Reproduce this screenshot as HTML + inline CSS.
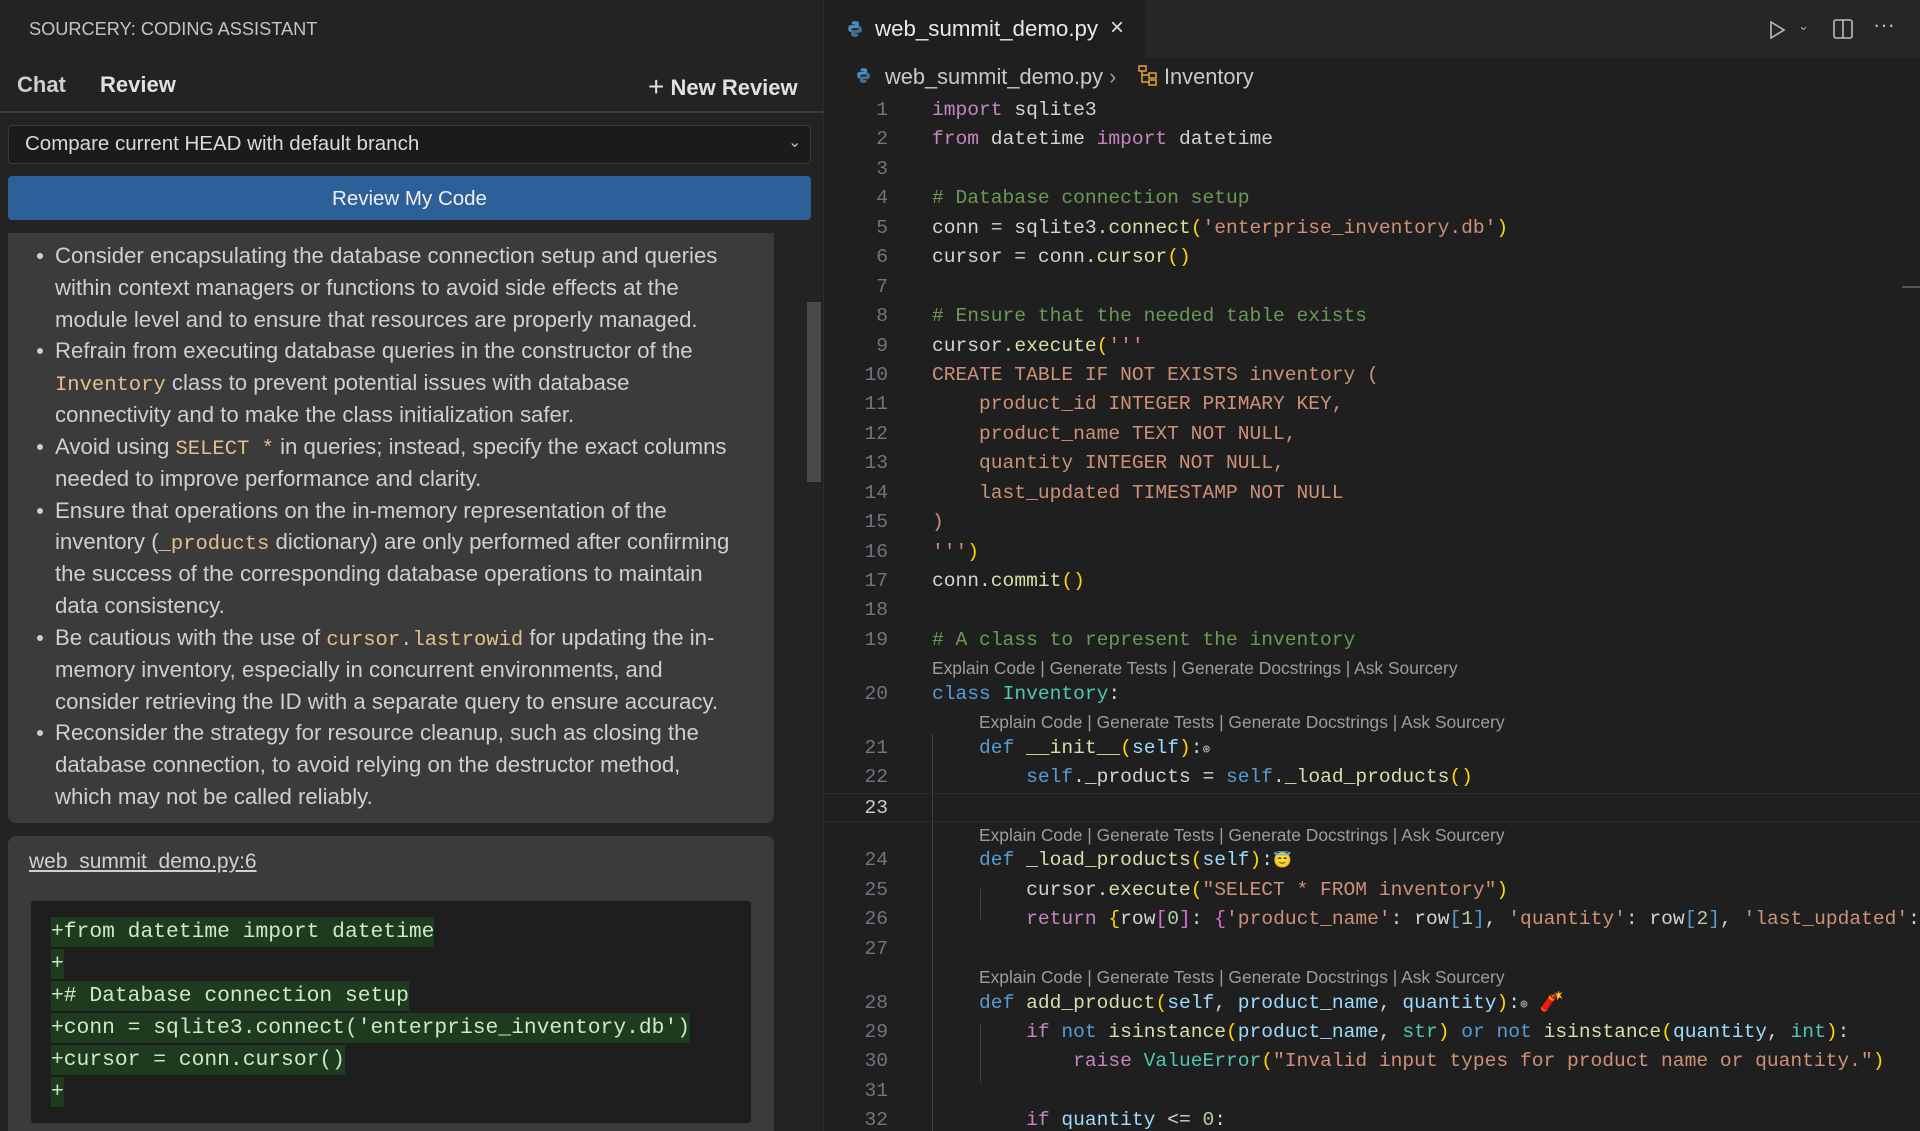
<!DOCTYPE html>
<html><head><meta charset="utf-8">
<style>
*{margin:0;padding:0;box-sizing:border-box}
html,body{overflow:hidden}
body{width:1920px;height:1131px;overflow:hidden;background:#1f1f1f;font-family:"Liberation Sans",sans-serif;position:relative}
#left{position:absolute;left:0;top:0;width:823px;height:1131px;background:#232323;overflow:hidden}
.abs{position:absolute;white-space:nowrap}
#sep{position:absolute;left:823px;top:0;width:1px;height:1131px;background:#2b2b2b}
#tabbar{position:absolute;left:824px;top:0;width:1096px;height:58px;background:#262626}
#tab{position:absolute;left:824px;top:0;width:321px;height:58px;background:#1f1f1f}
.bl{position:absolute;left:55px;color:#cfcfcf;font-size:22.2px;line-height:32px;white-space:nowrap}
.dot{position:absolute;left:37px;width:6px;height:6px;border-radius:3px;background:#cfcfcf}
.ic{font-family:"Liberation Mono",monospace;color:#e2c08d;font-size:20.5px}
.dl{position:absolute;left:51px;height:30px;background:#1e3a1f;color:#cfe8c8;font-family:"Liberation Mono",monospace;font-size:21.3px;line-height:30px;white-space:pre}
#code{position:absolute;left:824px;top:96px;width:1096px;height:1035px;overflow:hidden}
.r{position:relative;height:29.45px;line-height:29.45px;font-family:"Liberation Mono",monospace;font-size:19.6px;color:#d4d4d4;white-space:pre}
.r .n{position:absolute;left:0;width:64px;text-align:right;color:#6e7681}
.r .t{position:absolute;left:108px}
.cl{position:relative;height:24.45px;line-height:24.45px;font-size:17.4px;color:#9d9d9d;white-space:pre}
.cl span{position:absolute;top:1px}
.k{color:#c586c0}.b{color:#569cd6}.s{color:#ce9178}.c{color:#6a9955}.f{color:#dcdcaa}.y{color:#ffd700}.p{color:#9cdcfe}.g{color:#4ec9b0}.nu{color:#b5cea8}.pk{color:#da70d6}
.guide{position:absolute;width:1px;background:#404040}
</style></head><body>
<div id="left">
  <div class="abs" style="left:29px;top:19px;font-size:18.2px;color:#c4c4c4">SOURCERY: CODING ASSISTANT</div>
  <div class="abs" style="left:17px;top:72px;font-size:22px;font-weight:bold;color:#cfcfcf">Chat</div>
  <div class="abs" style="left:100px;top:72px;font-size:22px;font-weight:bold;color:#e0e0e0">Review</div>
  <div class="abs" style="left:648px;top:70px;font-size:22px;font-weight:bold;color:#e0e0e0"><span style="font-size:28px;font-weight:normal;position:relative;top:1px">+</span> New Review</div>
  <div style="position:absolute;left:0;top:111px;width:823px;height:2px;background:#3a3a3a"></div>
  <div style="position:absolute;left:8px;top:125px;width:803px;height:39px;background:#1b1b1b;border:1px solid #3a3a3a;border-radius:4px"></div>
  <div class="abs" style="left:25px;top:132px;font-size:20.5px;color:#dadada">Compare current HEAD with default branch</div>
  <div class="abs" style="left:788px;top:132px;font-size:16px;color:#bbb">&#8964;</div>
  <div style="position:absolute;left:8px;top:176px;width:803px;height:44px;background:#2d5f98;border-radius:4px"></div>
  <div class="abs" style="left:0;width:819px;text-align:center;top:187px;font-size:20.5px;color:#f0f0f0">Review My Code</div>
  <div style="position:absolute;left:8px;top:233px;width:766px;height:590px;background:#3b3b3b;border-radius:0 0 8px 8px"></div>
  <div style="position:absolute;left:807px;top:302px;width:14px;height:180px;background:#4a4a4a"></div>
  <div class="bl" style="top:240px">Consider encapsulating the database connection setup and queries</div>
  <div class="bl" style="top:272px">within context managers or functions to avoid side effects at the</div>
  <div class="bl" style="top:304px">module level and to ensure that resources are properly managed.</div>
  <div class="bl" style="top:335px">Refrain from executing database queries in the constructor of the</div>
  <div class="bl" style="top:367px"><span class="ic">Inventory</span> class to prevent potential issues with database</div>
  <div class="bl" style="top:399px">connectivity and to make the class initialization safer.</div>
  <div class="bl" style="top:431px">Avoid using <span class="ic">SELECT *</span> in queries; instead, specify the exact columns</div>
  <div class="bl" style="top:463px">needed to improve performance and clarity.</div>
  <div class="bl" style="top:495px">Ensure that operations on the in-memory representation of the</div>
  <div class="bl" style="top:526px">inventory (<span class="ic">_products</span> dictionary) are only performed after confirming</div>
  <div class="bl" style="top:558px">the success of the corresponding database operations to maintain</div>
  <div class="bl" style="top:590px">data consistency.</div>
  <div class="bl" style="top:622px">Be cautious with the use of <span class="ic">cursor.lastrowid</span> for updating the in-</div>
  <div class="bl" style="top:654px">memory inventory, especially in concurrent environments, and</div>
  <div class="bl" style="top:686px">consider retrieving the ID with a separate query to ensure accuracy.</div>
  <div class="bl" style="top:717px">Reconsider the strategy for resource cleanup, such as closing the</div>
  <div class="bl" style="top:749px">database connection, to avoid relying on the destructor method,</div>
  <div class="bl" style="top:781px">which may not be called reliably.</div>
  <div class="dot" style="top:253px"></div><div class="dot" style="top:348px"></div><div class="dot" style="top:444px"></div><div class="dot" style="top:508px"></div><div class="dot" style="top:635px"></div><div class="dot" style="top:730px"></div>
  <div style="position:absolute;left:8px;top:836px;width:766px;height:295px;background:#3b3b3b;border-radius:8px 8px 0 0"></div>
  <div class="abs" style="left:29px;top:850px;font-size:21px;color:#d0d0d0;text-decoration:underline">web_summit_demo.py:6</div>
  <div style="position:absolute;left:31px;top:901px;width:720px;height:222px;background:#1e1e1e;border-radius:3px"></div>
  <div class="dl" style="top:917px">+from datetime import datetime</div>
  <div class="dl" style="top:949px">+</div>
  <div class="dl" style="top:981px">+# Database connection setup</div>
  <div class="dl" style="top:1013px">+conn = sqlite3.connect('enterprise_inventory.db')</div>
  <div class="dl" style="top:1045px">+cursor = conn.cursor()</div>
  <div class="dl" style="top:1077px">+</div>
</div>
<div id="sep"></div>
<div id="tabbar"></div>
<div id="tab"></div>
<svg class="abs" style="left:846px;top:20px" width="18" height="18" viewBox="0 0 16 16"><path d="M7.9 1C5 1 5.2 2.3 5.2 2.3V4h2.8v.6H4.1S2 4.4 2 7.6s1.8 3 1.8 3h1.1V9s-.1-1.8 1.8-1.8h3s1.7 0 1.7-1.7V2.7S11.7 1 7.9 1z" fill="#4b8bbe"/><path d="M8.1 15c2.9 0 2.7-1.3 2.7-1.3V12H8v-.6h3.9s2.1.2 2.1-3-1.8-3-1.8-3h-1.1V7s.1 1.8-1.8 1.8h-3S4.6 8.8 4.6 10.5v2.8S4.3 15 8.1 15z" fill="#4b8bbe" opacity=".75"/></svg>
<div class="abs" style="left:875px;top:16px;font-size:22.3px;color:#e8e8e8">web_summit_demo.py</div>
<div class="abs" style="left:1110px;top:14px;font-size:24px;color:#ddd">×</div>
<svg class="abs" style="left:1766px;top:19px" width="22" height="22" viewBox="0 0 22 22"><path d="M5 3l13 8-13 8z" fill="none" stroke="#bbb" stroke-width="1.6"/></svg>
<div class="abs" style="left:1798px;top:18px;font-size:13px;color:#aaa">&#8964;</div>
<svg class="abs" style="left:1832px;top:18px" width="22" height="22" viewBox="0 0 22 22"><rect x="2" y="2" width="18" height="18" rx="2" fill="none" stroke="#bbb" stroke-width="1.6"/><path d="M11 2v18" stroke="#bbb" stroke-width="1.6"/></svg>
<div class="abs" style="left:1873px;top:12px;font-size:22px;color:#bbb">···</div>
<svg class="abs" style="left:855px;top:67px" width="17" height="17" viewBox="0 0 16 16"><path d="M7.9 1C5 1 5.2 2.3 5.2 2.3V4h2.8v.6H4.1S2 4.4 2 7.6s1.8 3 1.8 3h1.1V9s-.1-1.8 1.8-1.8h3s1.7 0 1.7-1.7V2.7S11.7 1 7.9 1z" fill="#4b8bbe"/><path d="M8.1 15c2.9 0 2.7-1.3 2.7-1.3V12H8v-.6h3.9s2.1.2 2.1-3-1.8-3-1.8-3h-1.1V7s.1 1.8-1.8 1.8h-3S4.6 8.8 4.6 10.5v2.8S4.3 15 8.1 15z" fill="#4b8bbe" opacity=".75"/></svg>
<div class="abs" style="left:885px;top:64px;font-size:21.8px;color:#c8c8c8">web_summit_demo.py <span style="color:#999">›</span></div>
<svg class="abs" style="left:1137px;top:64px" width="22" height="22" viewBox="0 0 22 22" fill="none" stroke="#e2a33a" stroke-width="1.5"><rect x="2" y="2" width="7" height="5"/><rect x="12" y="9" width="7" height="5"/><rect x="12" y="16" width="7" height="5"/><path d="M5 7v11h7M5 11h7"/></svg>
<div class="abs" style="left:1164px;top:64px;font-size:21.8px;color:#c8c8c8">Inventory</div>
<div style="position:absolute;left:1902px;top:286px;width:18px;height:2px;background:#555"></div>

<div id="code">
<div class="guide" style="left:108px;top:638px;height:400px"></div>
<div class="guide" style="left:156px;top:793px;height:30px"></div>
<div class="guide" style="left:156px;top:927px;height:60px"></div>
<div class="guide" style="left:156px;top:1050px;height:60px"></div>
<div class="guide" style="left:204px;top:1050px;height:30px"></div>
<div class="r"><span class="n">1</span><span class="t"><span class="k">import</span> sqlite3</span></div>
<div class="r"><span class="n">2</span><span class="t"><span class="k">from</span> datetime <span class="k">import</span> datetime</span></div>
<div class="r"><span class="n">3</span></div>
<div class="r"><span class="n">4</span><span class="t c"># Database connection setup</span></div>
<div class="r"><span class="n">5</span><span class="t">conn = sqlite3.<span class="f">connect</span><span class="y">(</span><span class="s">'enterprise_inventory.db'</span><span class="y">)</span></span></div>
<div class="r"><span class="n">6</span><span class="t">cursor = conn.<span class="f">cursor</span><span class="y">()</span></span></div>
<div class="r"><span class="n">7</span></div>
<div class="r"><span class="n">8</span><span class="t c"># Ensure that the needed table exists</span></div>
<div class="r"><span class="n">9</span><span class="t">cursor.<span class="f">execute</span><span class="y">(</span><span class="s">'''</span></span></div>
<div class="r"><span class="n">10</span><span class="t s">CREATE TABLE IF NOT EXISTS inventory (</span></div>
<div class="r"><span class="n">11</span><span class="t s">    product_id INTEGER PRIMARY KEY,</span></div>
<div class="r"><span class="n">12</span><span class="t s">    product_name TEXT NOT NULL,</span></div>
<div class="r"><span class="n">13</span><span class="t s">    quantity INTEGER NOT NULL,</span></div>
<div class="r"><span class="n">14</span><span class="t s">    last_updated TIMESTAMP NOT NULL</span></div>
<div class="r"><span class="n">15</span><span class="t s">)</span></div>
<div class="r"><span class="n">16</span><span class="t"><span class="s">'''</span><span class="y">)</span></span></div>
<div class="r"><span class="n">17</span><span class="t">conn.<span class="f">commit</span><span class="y">()</span></span></div>
<div class="r"><span class="n">18</span></div>
<div class="r"><span class="n">19</span><span class="t c"># A class to represent the inventory</span></div>
<div class="cl"><span style="left:108px">Explain Code | Generate Tests | Generate Docstrings | Ask Sourcery</span></div>
<div class="r"><span class="n">20</span><span class="t"><span class="b">class</span> <span class="g">Inventory</span>:</span></div>
<div class="cl"><span style="left:155px">Explain Code | Generate Tests | Generate Docstrings | Ask Sourcery</span></div>
<div class="r"><span class="n">21</span><span class="t">    <span class="b">def</span> <span class="f">__init__</span><span class="y">(</span><span class="p">self</span><span class="y">)</span>:<span style="font-size:13px;color:#aaa">⊛</span></span></div>
<div class="r"><span class="n">22</span><span class="t">        <span class="b">self</span>._products = <span class="b">self</span>.<span class="f">_load_products</span><span class="y">()</span></span></div>
<div class="r" style="border-top:1px solid #2c2c2c;border-bottom:1px solid #2c2c2c"><span class="n" style="color:#ccc">23</span></div>
<div class="cl"><span style="left:155px">Explain Code | Generate Tests | Generate Docstrings | Ask Sourcery</span></div>
<div class="r"><span class="n">24</span><span class="t">    <span class="b">def</span> <span class="f">_load_products</span><span class="y">(</span><span class="p">self</span><span class="y">)</span>:<span style="font-size:15px">😇</span></span></div>
<div class="r"><span class="n">25</span><span class="t">        cursor.<span class="f">execute</span><span class="y">(</span><span class="s">"SELECT * FROM inventory"</span><span class="y">)</span></span></div>
<div class="r"><span class="n">26</span><span class="t">        <span class="k">return</span> <span class="y">{</span>row<span class="pk">[</span><span class="nu">0</span><span class="pk">]</span>: <span class="pk">{</span><span class="s">'product_name'</span>: row<span class="b">[</span><span class="nu">1</span><span class="b">]</span>, <span class="s">'quantity'</span>: row<span class="b">[</span><span class="nu">2</span><span class="b">]</span>, <span class="s">'last_updated'</span>: row</span></div>
<div class="r"><span class="n">27</span></div>
<div class="cl"><span style="left:155px">Explain Code | Generate Tests | Generate Docstrings | Ask Sourcery</span></div>
<div class="r"><span class="n">28</span><span class="t">    <span class="b">def</span> <span class="f">add_product</span><span class="y">(</span><span class="p">self</span>, <span class="p">product_name</span>, <span class="p">quantity</span><span class="y">)</span>:<span style="font-size:13px;color:#aaa">⊛</span> <span style="color:#e04040">🧨</span></span></div>
<div class="r"><span class="n">29</span><span class="t">        <span class="k">if</span> <span class="b">not</span> <span class="f">isinstance</span><span class="y">(</span><span class="p">product_name</span>, <span class="g">str</span><span class="y">)</span> <span class="b">or</span> <span class="b">not</span> <span class="f">isinstance</span><span class="y">(</span><span class="p">quantity</span>, <span class="g">int</span><span class="y">)</span>:</span></div>
<div class="r"><span class="n">30</span><span class="t">            <span class="k">raise</span> <span class="g">ValueError</span><span class="y">(</span><span class="s">"Invalid input types for product name or quantity."</span><span class="y">)</span></span></div>
<div class="r"><span class="n">31</span></div>
<div class="r"><span class="n">32</span><span class="t">        <span class="k">if</span> <span class="p">quantity</span> &lt;= <span class="nu">0</span>:</span></div>
</div>
</body></html>
